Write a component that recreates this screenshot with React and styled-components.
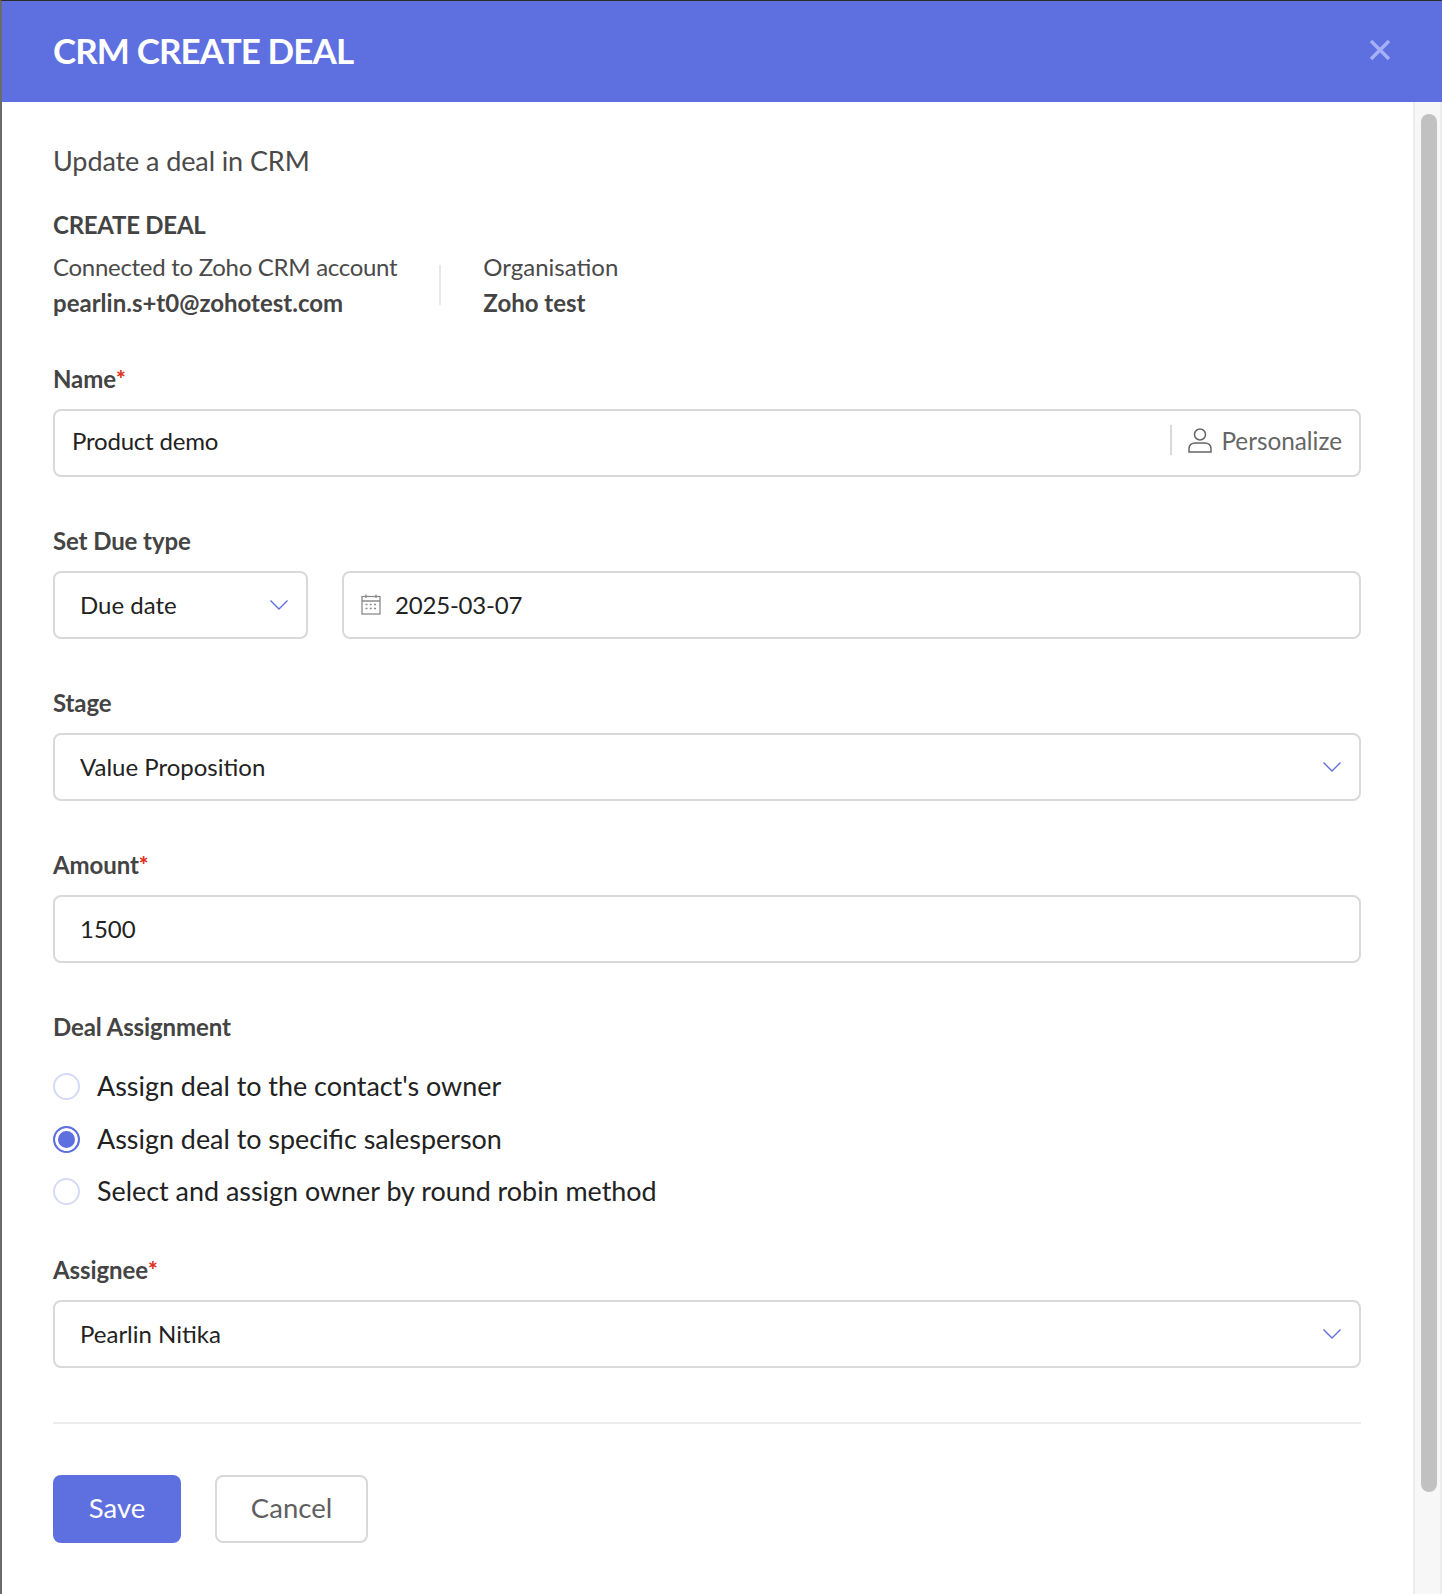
import React from 'react'
import styled, { createGlobalStyle } from 'styled-components'

const GlobalStyle = createGlobalStyle`
  html, body { margin: 0; padding: 0; background: #fff; }
  body { font-family: Lato, "Open Sans", sans-serif; color: #444; }
  * { box-sizing: border-box; }
`

const Dialog = styled.div`
  width: 1442px;
  height: 1594px;
  display: flex;
  flex-direction: column;
  border-top: 1px solid #2c2c2c;
  border-left: 2px solid #6b6b6b;
  overflow: hidden;
`

const Header = styled.header`
  height: 101px;
  flex: none;
  background: #5e6fe0;
  display: flex;
  align-items: center;
  justify-content: space-between;
  padding: 0 51px 3px 51px;
`

const Title = styled.h1`
  margin: 0;
  color: #fff;
  font-size: 35px;
  font-weight: 700;
  letter-spacing: -0.9px;
`

const Close = styled.button`
  border: none;
  background: none;
  padding: 0;
  width: 22px;
  height: 22px;
  display: block;
`

const Body = styled.div`
  flex: 1;
  display: flex;
  min-height: 0;
`

const Content = styled.main`
  width: 1411px;
  padding: 41px 52px 0 51px;
`

const Intro = styled.p`
  margin: 0;
  font-size: 27px;
  line-height: 36px;
  letter-spacing: -0.1px;
  color: #4a4a4a;
`

const SectionTitle = styled.h2`
  margin: 28px 0 0;
  font-size: 24px;
  line-height: 36px;
  font-weight: 700;
  letter-spacing: -0.25px;
  color: #444;
`

const Account = styled.div`
  display: flex;
  align-items: center;
  margin-top: 6px;
`

const AccountCell = styled.div`
  font-size: 24px;
  line-height: 35px;
  color: #4a4a4a;

  strong {
    display: block;
    margin-top: 1px;
    font-weight: 700;
    color: #444;
  }
`

const AccountLead = styled.span`
  letter-spacing: -0.29px;
`

const AccountRule = styled.div`
  width: 2px;
  height: 40px;
  background: #e8e8e8;
  margin: 0 42px;
`

const Field = styled.div`
  margin-top: ${p => p.$top}px;
`

const Label = styled.label`
  display: block;
  font-size: 24px;
  line-height: 32px;
  font-weight: 700;
  letter-spacing: -0.1px;
  color: #444;
  margin-bottom: ${p => p.$gap ?? 14}px;

  em {
    color: #e0301e;
    font-style: normal;
    font-weight: 900;
    font-size: 23px;
    vertical-align: 1px;
    line-height: 0;
  }
`

const Box = styled.div`
  height: 68px;
  border: 2px solid #d9d9d9;
  border-radius: 8px;
  background: #fff;
  display: flex;
  align-items: center;
  gap: ${p => p.$gap ?? 0}px;
  padding: 0 17px ${p => p.$bottom ?? 2}px ${p => p.$left ?? 25}px;
  font-size: 24px;
  color: #222;
  width: ${p => (p.$width ? `${p.$width}px` : 'auto')};
  flex: ${p => (p.$width ? 'none' : 1)};
`

const BoxText = styled.span`
  flex: 1;
  letter-spacing: ${p => p.$tight ? '-0.2px' : '0'};
`

const Personalize = styled.div`
  display: flex;
  align-items: center;
  height: 30px;
  border-left: 2px solid #d9d9d9;
  padding-left: 15px;
  font-size: 24.3px;
  color: #666;
  gap: 8px;
`

const DueRow = styled.div`
  display: flex;
  gap: 34px;
`

const RadioGroup = styled.div`
  display: flex;
  flex-direction: column;
  gap: 19.5px;
  margin-top: 26px;
`

const RadioRow = styled.div`
  display: flex;
  align-items: center;
  gap: 17px;
  font-size: 26.9px;
  line-height: 33px;
  color: #222;
`

const RadioDot = styled.span`
  width: 27px;
  height: 27px;
  margin-top: 2px;
  border-radius: 50%;
  flex: none;
  border: 2px solid ${p => (p.$checked ? '#5e6fe0' : '#d5daf8')};
  background: ${p => (p.$checked ? '#5e6fe0' : '#fff')};
  box-shadow: ${p => (p.$checked ? 'inset 0 0 0 3px #fff' : 'none')};
`

const Divider = styled.hr`
  border: none;
  height: 2px;
  background: #ececec;
  margin: 54px 0 0;
`

const Actions = styled.div`
  display: flex;
  gap: 34px;
  margin-top: 51px;
`

const Button = styled.button`
  height: 68px;
  width: ${p => p.$width}px;
  padding: 0 0 3px;
  border-radius: 8px;
  font-family: inherit;
  font-size: 27.5px;
  border: ${p => (p.$primary ? 'none' : '2px solid #d9d9d9')};
  background: ${p => (p.$primary ? '#5e6fe0' : '#fff')};
  color: ${p => (p.$primary ? '#fff' : '#5f5f5f')};
`

const Scrollbar = styled.div`
  width: 29px;
  flex: none;
  background: #f7f7f7;
  border-left: 2px solid #ececec;
  border-right: 2px solid #ececec;
  padding: 12px 0 0 6px;
`

const Thumb = styled.div`
  width: 16px;
  height: 1378px;
  background: #c1c1c1;
  border-radius: 8px;
`

const Chevron = () => (
  <svg width="20" height="12" viewBox="0 0 20 12" fill="none" stroke="#5e6fe0" strokeWidth="1.4">
    <path d="M1.5 2.5 10 11l8.5-8.5" />
  </svg>
)

const CloseIcon = () => (
  <svg width="22" height="22" viewBox="0 0 22 22" fill="none" stroke="#a5b0f5" strokeWidth="3.4">
    <path d="M2 2l18 18M20 2 2 20" />
  </svg>
)

const PersonIcon = () => (
  <svg width="26" height="26" viewBox="0 0 26 26" fill="none" stroke="#666" strokeWidth="1.5">
    <circle cx="13" cy="7.5" r="5.5" />
    <path d="M2 25v-3.5c0-3.5 3-5.5 6-5.5h10c3 0 6 2 6 5.5V25z" />
  </svg>
)

const CalendarIcon = () => (
  <svg width="20" height="21" viewBox="0 0 20 21" fill="none" stroke="#8a8a8a" strokeWidth="1.3">
    <rect x="1" y="2.5" width="18" height="17.5" />
    <path d="M1 7h18M5 0.5v3.5M15 0.5v3.5" />
    <path d="M4.5 10.5h2.5M8.7 10.5h2.5M13 10.5h2.5M4.5 14.5h2.5M8.7 14.5h2.5M13 14.5h2.5" strokeDasharray="2 .5" />
  </svg>
)

const App = () => {
  return (
    <Dialog>
      <GlobalStyle />
      <Header>
        <Title>CRM CREATE DEAL</Title>
        <Close aria-label="Close"><CloseIcon /></Close>
      </Header>
      <Body>
        <Content>
          <Intro>Update a deal in CRM</Intro>
          <SectionTitle>CREATE DEAL</SectionTitle>
          <Account>
            <AccountCell>
              <AccountLead>Connected to Zoho CRM account</AccountLead>
              <strong>pearlin.s+t0@zohotest.com</strong>
            </AccountCell>
            <AccountRule />
            <AccountCell>
              Organisation
              <strong>Zoho test</strong>
            </AccountCell>
          </Account>

          <Field $top={43}>
            <Label>Name<em>*</em></Label>
            <Box $left={17} $bottom={6}>
              <BoxText $tight>Product demo</BoxText>
              <Personalize><PersonIcon />Personalize</Personalize>
            </Box>
          </Field>

          <Field $top={48}>
            <Label>Set Due type</Label>
            <DueRow>
              <Box $width={255}>
                <BoxText>Due date</BoxText>
                <Chevron />
              </Box>
              <Box $left={17} $gap={14}>
                <CalendarIcon />
                <BoxText $tight>2025-03-07</BoxText>
              </Box>
            </DueRow>
          </Field>

          <Field $top={48}>
            <Label>Stage</Label>
            <Box>
              <BoxText>Value Proposition</BoxText>
              <Chevron />
            </Box>
          </Field>

          <Field $top={48}>
            <Label>Amount<em>*</em></Label>
            <Box><BoxText>1500</BoxText></Box>
          </Field>

          <Field $top={48}>
            <Label $gap={0}>Deal Assignment</Label>
            <RadioGroup>
              <RadioRow><RadioDot />Assign deal to the contact's owner</RadioRow>
              <RadioRow><RadioDot $checked />Assign deal to specific salesperson</RadioRow>
              <RadioRow><RadioDot />Select and assign owner by round robin method</RadioRow>
            </RadioGroup>
          </Field>

          <Field $top={47}>
            <Label>Assignee<em>*</em></Label>
            <Box>
              <BoxText>Pearlin Nitika</BoxText>
              <Chevron />
            </Box>
          </Field>

          <Divider />
          <Actions>
            <Button $primary $width={128}>Save</Button>
            <Button $width={153}>Cancel</Button>
          </Actions>
        </Content>
        <Scrollbar><Thumb /></Scrollbar>
      </Body>
    </Dialog>
  )
}

export default App
